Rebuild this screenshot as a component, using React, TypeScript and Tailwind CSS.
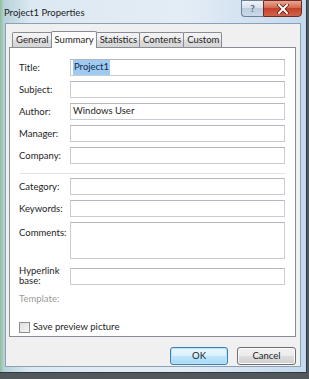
import React from "react";

function Field({ label, h = 17, children }: { label: React.ReactNode; h?: number; children?: React.ReactNode }) {
  return (
    <div className="flex items-center">
      <div className="w-[51px] leading-[10px]">{label}</div>
      <div
        className="w-[215px] border border-[#c9ccd3] border-t-[#b4b7bf] bg-white pl-[2px] flex items-center"
        style={{ height: h }}
      >
        {children}
      </div>
    </div>
  );
}

function Tab({ label, selected }: { label: string; selected?: boolean }) {
  if (selected) {
    return (
      <div className="relative z-10 -mb-px h-[17px] pl-[3px] pr-[2px] -ml-px border border-b-0 border-[#898c95] bg-white rounded-t-[2px] flex items-start pt-[1px]">
        {label}
      </div>
    );
  }
  return (
    <div className="h-[15px] pl-[3px] pr-[2px] -ml-px first:ml-0 border border-b-0 border-[#898c95] rounded-t-[2px] bg-[linear-gradient(#f4f4f4,#ebebeb_50%,#dedede_50%,#d4d4d4)] flex items-center">
      {label}
    </div>
  );
}

export default function App() {
  return (
    <div className="w-[309px] h-[379px] bg-[#52575c] overflow-hidden text-[9.5px] text-[#1e1e1e] [font-family:'Lato','Open_Sans',sans-serif]">
      <div className="w-[307px] h-[373px] border-r border-b border-[#2f3a44] bg-[linear-gradient(90deg,#8fbf95_0px,#b6d2d8_4px,#dce8f2_30px,#e4edf5_60%,#c3d9ee_100%)] flex flex-col">
        {/* title bar */}
        <div className="h-[23px] flex items-start justify-between pl-[4px] pr-[4px]">
          <div className="mt-[6px] text-[9.5px] text-[#1b1f24]">Project1 Properties</div>
          <div className="flex">
            <div className="w-[22px] h-[17px] border border-[#6b7f96] border-r-0 rounded-bl-[4px] bg-[linear-gradient(#eef3f8,#d4e0ec_50%,#bccede_50%,#c9dbea)] flex items-center justify-center text-[10px] font-bold text-[#5a6470]">
              ?
            </div>
            <div className="w-[39px] h-[17px] border border-[#6e2a20] rounded-br-[4px] bg-[linear-gradient(#e9a894,#d46a50_45%,#c4412a_50%,#d0654c)] flex items-center justify-center">
              <svg width="12" height="10" viewBox="0 0 12 10">
                <path d="M2 1 L10 9 M10 1 L2 9" stroke="#5a1c12" strokeWidth="3.6" strokeLinecap="square" />
                <path d="M2 1 L10 9 M10 1 L2 9" stroke="#ffffff" strokeWidth="2" strokeLinecap="square" />
              </svg>
            </div>
          </div>
        </div>

        {/* client area */}
        <div className="ml-[5px] mr-[5px] h-[344px] border border-[#8da1b6] bg-[#f0f0f0] flex flex-col">
          <div className="mt-[6px] pl-[6px] flex items-end h-[17px]">
            <Tab label="General" />
            <Tab label="Summary" selected />
            <Tab label="Statistics" />
            <Tab label="Contents" />
            <Tab label="Custom" />
          </div>
          <div className="ml-[3px] w-[287px] h-[290px] border border-[#898c95] bg-white pl-[9px] pt-[11px] flex flex-col">
            <div className="flex flex-col gap-[5px]">
              <Field label="Title:">
                <span className="bg-[#9fcaf1] text-[#0f2c4a] px-[1px]">Project1</span>
              </Field>
              <Field label="Subject:" />
              <Field label="Author:">Windows User</Field>
              <Field label="Manager:" />
              <Field label="Company:" />
            </div>
            <div className="mt-[9px] ml-[1px] w-[265px] h-px bg-[#dde4ea]" />
            <div className="mt-[4px] flex flex-col gap-[5px]">
              <Field label="Category:" />
              <Field label="Keywords:" />
              <div className="flex items-start">
                <div className="w-[51px] pt-[4px]">Comments:</div>
                <div className="w-[215px] h-[37px] border border-[#c9ccd3] border-t-[#b4b7bf] bg-white" />
              </div>
            </div>
            <div className="mt-[7px]">
              <Field
                label={
                  <>
                    Hyperlink
                    <br />
                    base:
                  </>
                }
              />
            </div>
            <div className="mt-[6px] text-[#9b9b9b] leading-[13px]">Template:</div>
            <div className="mt-[15px] flex items-center gap-[3px]">
              <div className="w-[11px] h-[11px] border border-[#8e8f8f] bg-[linear-gradient(135deg,#dcdcdc,#f6f6f6)]" />
              <span>Save preview picture</span>
            </div>
          </div>
          <div className="mt-[10px] pr-[4px] flex justify-end gap-[9px]">
            <div className="w-[58px] h-[18px] rounded-[3px] border border-[#3c7fb1] bg-[linear-gradient(#eaf6fd,#d9f0fc_50%,#bee6fd_50%,#a7d9f5)] shadow-[inset_0_0_0_1px_#b9e2f8] flex items-center justify-center">
              OK
            </div>
            <div className="w-[59px] h-[18px] rounded-[3px] border border-[#707070] bg-[linear-gradient(#f2f2f2,#ebebeb_50%,#dddddd_50%,#cfcfcf)] shadow-[inset_0_0_0_1px_#fbfbfb] flex items-center justify-center">
              Cancel
            </div>
          </div>
        </div>
      </div>
    </div>
  );
}
